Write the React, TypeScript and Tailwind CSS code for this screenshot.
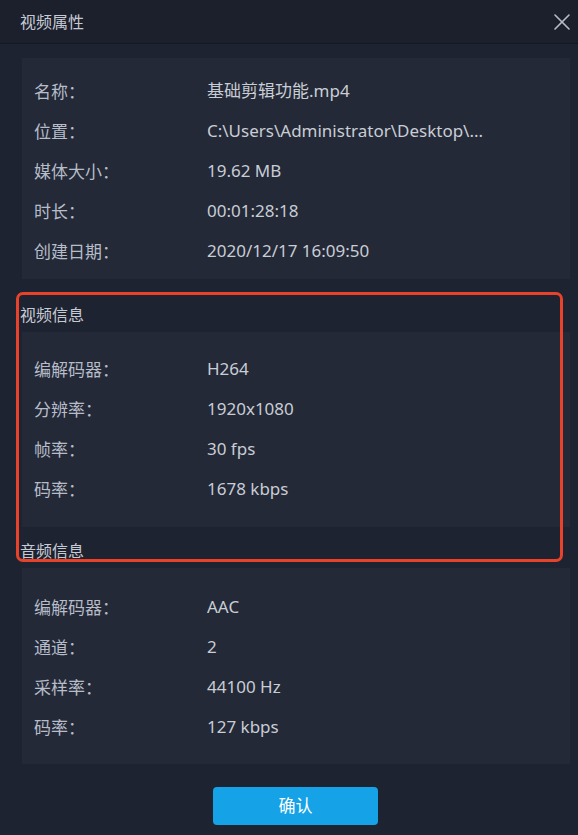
import { X } from "lucide-react"

type Row = { label: string; value: string }

const general: Row[] = [
  { label: "名称：", value: "基础剪辑功能.mp4" },
  { label: "位置：", value: "C:\\Users\\Administrator\\Desktop\\..." },
  { label: "媒体大小：", value: "19.62 MB" },
  { label: "时长：", value: "00:01:28:18" },
  { label: "创建日期：", value: "2020/12/17 16:09:50" },
]

const video: Row[] = [
  { label: "编解码器：", value: "H264" },
  { label: "分辨率：", value: "1920x1080" },
  { label: "帧率：", value: "30 fps" },
  { label: "码率：", value: "1678 kbps" },
]

const audio: Row[] = [
  { label: "编解码器：", value: "AAC" },
  { label: "通道：", value: "2" },
  { label: "采样率：", value: "44100 Hz" },
  { label: "码率：", value: "127 kbps" },
]

function InfoPanel({ rows, className }: { rows: Row[]; className: string }) {
  return (
    <div className={`ml-[22px] mr-[8px] bg-[#232937] ${className}`}>
      {rows.map((r) => (
        <div key={r.label} className="flex h-[40px] items-center">
          <span
            className="w-[185px] pl-[12px] text-[#b6bcc8]"
            style={{ fontFamily: '"Noto Sans CJK SC", sans-serif' }}
          >
            {r.label}
          </span>
          <span className="text-[#c9cdd5]">{r.value}</span>
        </div>
      ))}
    </div>
  )
}

export default function App() {
  return (
    <div
      className="relative flex h-[835px] w-[578px] flex-col overflow-hidden bg-[#1e2331] text-[17px]"
      style={{ fontFamily: '"Noto Sans", "Noto Sans CJK SC", sans-serif' }}
    >
      <div className="flex h-[44px] shrink-0 items-center justify-between border-b border-[#151925] bg-[#1c202d] pl-[20px] pr-[2px]">
        <span className="text-[16px] text-[#c6cad3]">视频属性</span>
        <X className="h-[28px] w-[28px] text-[#b8bcc6]" strokeWidth={1.4} />
      </div>

      <InfoPanel rows={general} className="mt-[14px] pt-[13px] pb-[8px]" />

      <div className="mt-[18px] flex h-[35px] items-center pl-[20px] text-[16px] text-[#c6cad3]">视频信息</div>
      <InfoPanel rows={video} className="pt-[17px] pb-[18px]" />

      <div className="mt-[6px] flex h-[35px] items-center pl-[20px] text-[16px] text-[#c6cad3]">音频信息</div>
      <InfoPanel rows={audio} className="pt-[19px] pb-[17px]" />

      <div className="mt-[23px] flex justify-center pl-[13px]">
        <button
          type="button"
          className="h-[38px] w-[165px] rounded-[4px] bg-[#16a2e6] text-[17px] text-white"
        >
          确认
        </button>
      </div>

      <div className="pointer-events-none absolute left-[16px] top-[292px] h-[270px] w-[547px] rounded-[7px] border-[3px] border-[#e8432a]" />
    </div>
  )
}
